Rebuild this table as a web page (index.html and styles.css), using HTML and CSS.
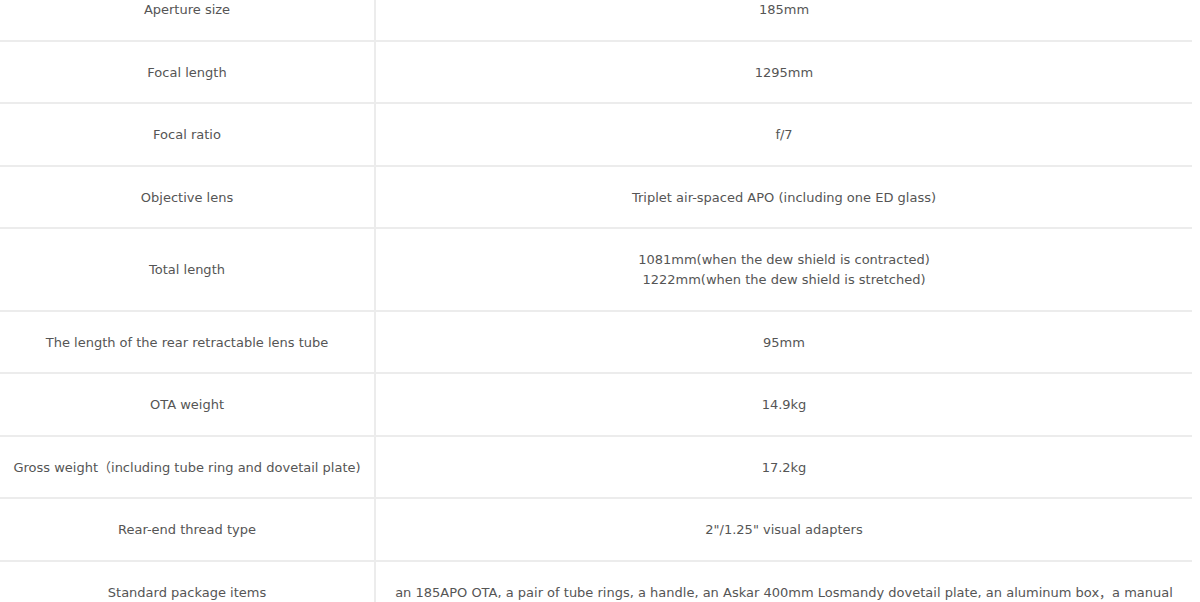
FILE: index.html
```html
<!DOCTYPE html>
<html lang="en">
<head>
<meta charset="utf-8">
<title>Specifications</title>
<link rel="stylesheet" href="styles.css">
</head>
<body>
<table class="spec">
  <tbody>
    <tr><td class="k">Aperture size</td><td class="v">185mm</td></tr>
    <tr><td class="k">Focal length</td><td class="v">1295mm</td></tr>
    <tr><td class="k">Focal ratio</td><td class="v">f/7</td></tr>
    <tr><td class="k">Objective lens</td><td class="v">Triplet air-spaced APO (including one ED glass)</td></tr>
    <tr><td class="k">Total length</td><td class="v">1081mm(when the dew shield is contracted)<br>1222mm(when the dew shield is stretched)</td></tr>
    <tr><td class="k">The length of the rear retractable lens tube</td><td class="v">95mm</td></tr>
    <tr><td class="k">OTA weight</td><td class="v">14.9kg</td></tr>
    <tr><td class="k">Gross weight（including tube ring and dovetail plate)</td><td class="v">17.2kg</td></tr>
    <tr><td class="k">Rear-end thread type</td><td class="v">2"/1.25" visual adapters</td></tr>
    <tr><td class="k">Standard package items</td><td class="v">an 185APO OTA, a pair of tube rings, a handle, an Askar 400mm Losmandy dovetail plate, an aluminum box，a manual</td></tr>
  </tbody>
</table>
</body>
</html>
```

FILE: styles.css
```css
html, body {
  margin: 0;
  padding: 0;
  background: #fff;
  overflow: hidden;
}
.spec {
  width: 1192px;
  border-collapse: collapse;
  margin-top: -23px;
  font-family: "DejaVu Sans", "Noto Sans CJK SC", sans-serif;
  font-size: 13px;
  color: #555;
  table-layout: fixed;
}
.spec td {
  text-align: center;
  vertical-align: middle;
  padding: 21.25px 0 19.25px;
  line-height: 20px;
  border-top: 2px solid #ececec;
  border-bottom: 2px solid #ececec;
}
.spec td.k {
  width: 374px;
  border-right: 2px solid #ececec;
}
```
